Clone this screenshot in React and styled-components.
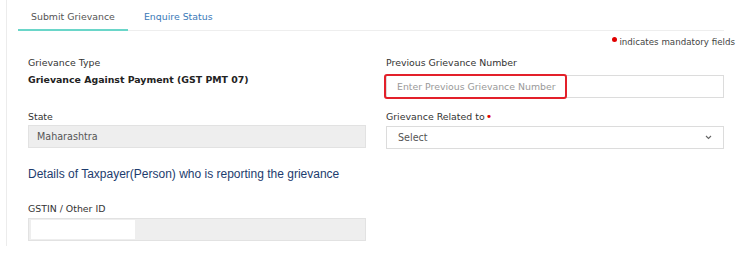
import React from 'react';
import styled, { createGlobalStyle } from 'styled-components';

const Global = createGlobalStyle`
  body {
    margin: 0;
    background: #fff;
    font-family: "DejaVu Sans", Verdana, sans-serif;
  }
`;

const Page = styled.div`
  width: 742px;
  height: 253px;
  box-sizing: border-box;
  padding-left: 6px;
  overflow: hidden;
`;

const Panel = styled.div`
  border-left: 1px solid #ececec;
  height: 246px;
  padding-right: 18px;
`;

const TabBar = styled.div`
  display: flex;
  margin-left: 11px;
  border-bottom: 1px solid #eeeeee;
  height: 31px;
  box-sizing: border-box;
`;

const Tab = styled.div`
  padding: 4px 13px 0 ${p => (p.$active ? '13px' : '16px')};
  display: flex;
  align-items: center;
  font-size: 9.4px;
  color: ${p => (p.$active ? '#555' : '#3a79b8')};
  border-bottom: 2px solid ${p => (p.$active ? '#6ad6c9' : 'transparent')};
  margin-bottom: -1px;
`;

const Mandatory = styled.div`
  text-align: right;
  font-size: 8.7px;
  color: #444;
  margin-top: 4px;
  margin-right: -11px;
  line-height: 14px;
`;

const Dot = styled.span`
  display: inline-block;
  width: 5px;
  height: 5px;
  border-radius: 50%;
  background: #e00000;
  vertical-align: top;
  margin-top: 2px;
  margin-right: 2px;
`;

const Form = styled.div`
  padding-left: 21px;
`;

const Row = styled.div`
  display: grid;
  grid-template-columns: 338px 338px;
  column-gap: 20px;
  margin-top: ${p => p.$top || '0'};
`;

const Field = styled.div`
  display: flex;
  flex-direction: column;
`;

const Label = styled.div`
  font-size: 9.4px;
  color: #333;
  line-height: 13px;
  margin-bottom: ${p => p.$gap || '6px'};
`;

const Req = styled.span`
  color: #e00000;
  font-size: 11px;
  margin-left: 1px;
`;

const Value = styled.div`
  font-size: 9.4px;
  font-weight: bold;
  color: #222;
  line-height: 14px;
  margin-top: -1px;
`;

const InputWrap = styled.div`
  position: relative;
`;

const Input = styled.div`
  height: 23px;
  box-sizing: border-box;
  border: 1px solid ${p => (p.$disabled ? '#e2e2e2' : '#dcdcdc')};
  background: ${p => (p.$disabled ? '#eeeeee' : '#fff')};
  color: ${p => (p.$placeholder ? '#999' : '#555')};
  font-size: ${p => (p.$placeholder ? '9.35px' : '9.6px')};
  display: flex;
  align-items: center;
  padding: 0 ${p => p.$pad || '8px'};
  justify-content: space-between;
`;

const Highlight = styled.div`
  position: absolute;
  left: -2px;
  top: -1px;
  width: 183px;
  height: 25px;
  border: 2px solid #e3202a;
  border-radius: 3px;
  box-sizing: border-box;
`;

const Masked = styled.div`
  width: 104px;
  height: 19px;
  background: #fff;
  margin-left: -6px;
`;

const Heading = styled.div`
  font-family: "Liberation Sans", Arial, sans-serif;
  font-size: 12px;
  color: #1d3c6e;
  margin-top: 17px;
  line-height: 16px;
`;

const Chevron = () => (
  <svg width="7" height="5" viewBox="0 0 7 5">
    <path d="M1 1 L3.5 3.5 L6 1" fill="none" stroke="#666" strokeWidth="1.1" />
  </svg>
);

export default function App() {
  return (
    <Page>
      <Global />
      <Panel>
        <TabBar>
          <Tab $active>Submit Grievance</Tab>
          <Tab>Enquire Status</Tab>
        </TabBar>
        <Mandatory>
          <Dot />indicates mandatory fields
        </Mandatory>
        <Form>
          <Row $top="7px">
            <Field>
              <Label $gap="5px">Grievance Type</Label>
              <Value>Grievance Against Payment (GST PMT 07)</Value>
            </Field>
            <Field>
              <Label>Previous Grievance Number</Label>
              <InputWrap>
                <Input $placeholder $pad="10px">Enter Previous Grievance Number</Input>
                <Highlight />
              </InputWrap>
            </Field>
          </Row>
          <Row $top="12px">
            <Field>
              <Label $gap="2px">State</Label>
              <Input $disabled>Maharashtra</Input>
            </Field>
            <Field>
              <Label $gap="3px">
                Grievance Related to<Req>•</Req>
              </Label>
              <Input $pad="11px">
                Select
                <Chevron />
              </Input>
            </Field>
          </Row>
          <Heading>Details of Taxpayer(Person) who is reporting the grievance</Heading>
          <Row $top="20px">
            <Field>
              <Label $gap="3px">GSTIN / Other ID</Label>
              <Input $disabled>
                <Masked />
              </Input>
            </Field>
          </Row>
        </Form>
      </Panel>
    </Page>
  );
}
